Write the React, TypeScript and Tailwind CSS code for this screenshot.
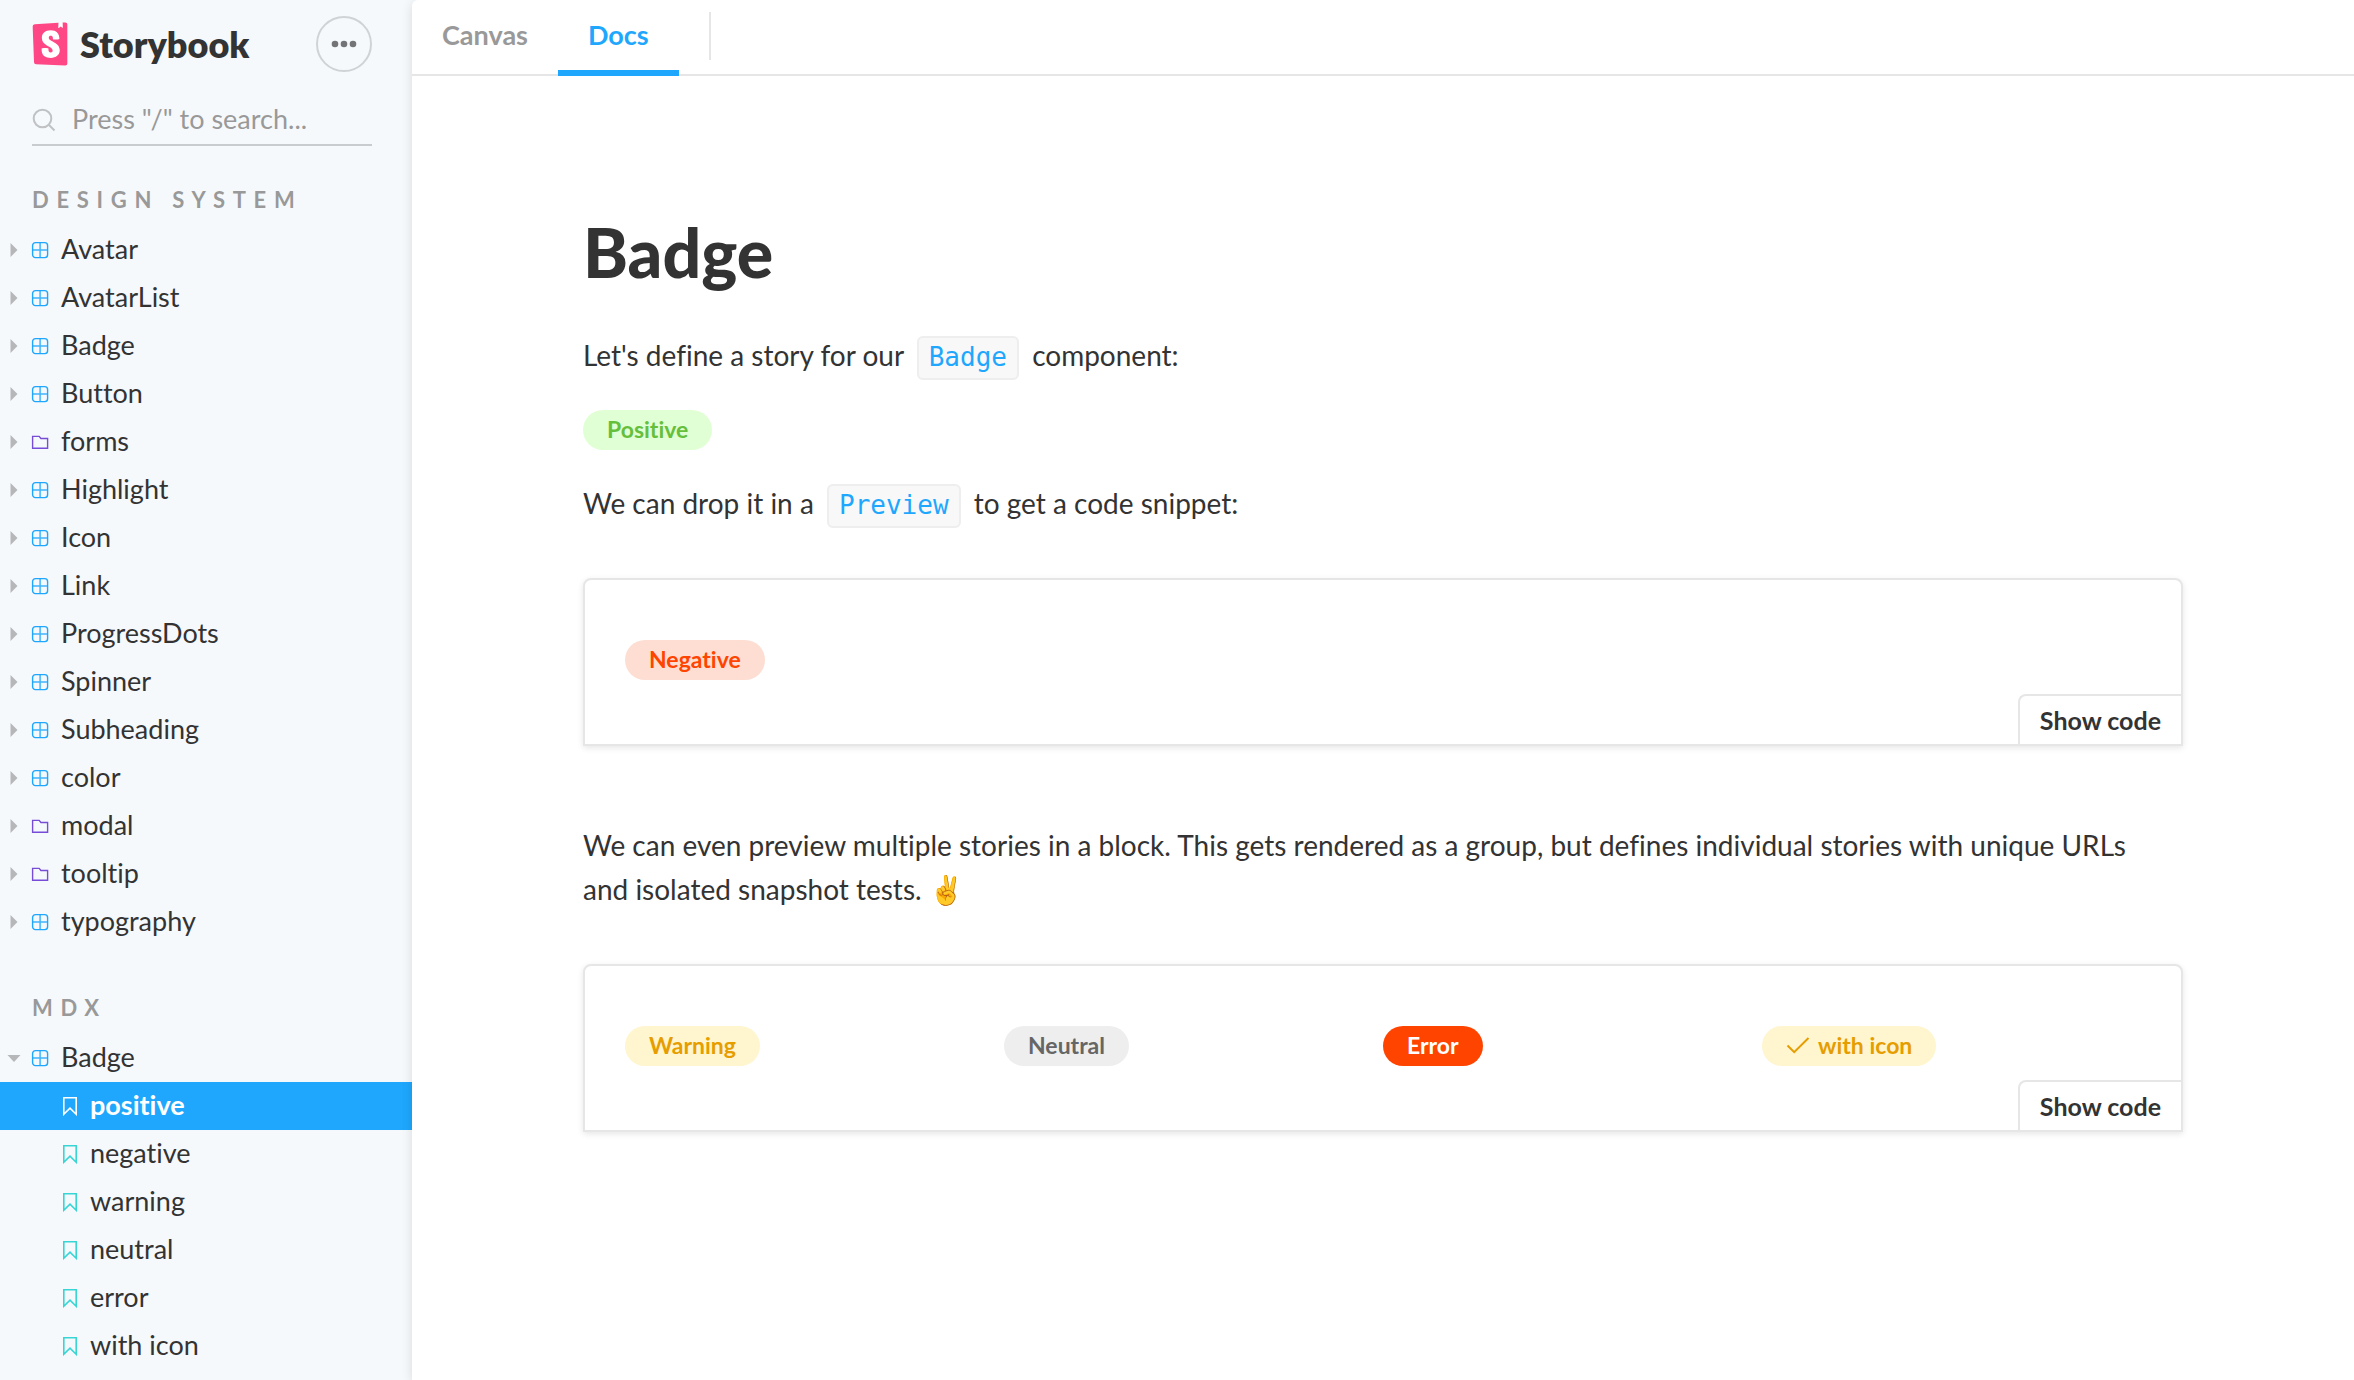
import type { ReactNode } from "react";

type ItemKind = "component" | "folder";

const designSystem: { name: string; kind: ItemKind }[] = [
  { name: "Avatar", kind: "component" },
  { name: "AvatarList", kind: "component" },
  { name: "Badge", kind: "component" },
  { name: "Button", kind: "component" },
  { name: "forms", kind: "folder" },
  { name: "Highlight", kind: "component" },
  { name: "Icon", kind: "component" },
  { name: "Link", kind: "component" },
  { name: "ProgressDots", kind: "component" },
  { name: "Spinner", kind: "component" },
  { name: "Subheading", kind: "component" },
  { name: "color", kind: "component" },
  { name: "modal", kind: "folder" },
  { name: "tooltip", kind: "folder" },
  { name: "typography", kind: "component" },
];

const stories = ["positive", "negative", "warning", "neutral", "error", "with icon"];

function Logo() {
  return (
    <svg viewBox="2 0 20 24" className="h-11 w-9 shrink-0" aria-hidden="true">
      <path fill="#fff" d="M16 .4l4-.2v4h-4z" />
      <path
        fill="#FF4785"
        d="M16.71.243l-.12 2.71a.18.18 0 00.29.15l1.06-.8.9.7a.18.18 0 00.28-.14l-.1-2.76 1.33-.1a1.2 1.2 0 011.279 1.2v21.596a1.2 1.2 0 01-1.26 1.2l-16.096-.72a1.2 1.2 0 01-1.15-1.16l-.75-19.797a1.2 1.2 0 011.13-1.27L16.7.222z"
      />
      <path
        fill="#fff"
        d="M13.64 9.3c0 .47 3.16.24 3.59-.08 0-3.2-1.72-4.89-4.859-4.89-3.15 0-4.899 1.72-4.899 4.29 0 4.45 5.999 4.53 5.999 6.959 0 .7-.32 1.1-1.05 1.1-.96 0-1.35-.49-1.3-2.16 0-.36-3.649-.48-3.769 0-.27 4.03 2.23 5.2 5.099 5.2 2.79 0 4.969-1.49 4.969-4.18 0-4.77-6.099-4.64-6.099-6.999 0-.97.72-1.1 1.13-1.1.45 0 1.25.07 1.19 1.87z"
      />
    </svg>
  );
}

function SearchIcon() {
  return (
    <svg viewBox="0 0 24 24" className="size-6 shrink-0" fill="none" stroke="#BFC1C3" strokeWidth="2" aria-hidden="true">
      <circle cx="10.5" cy="10.5" r="8.8" />
      <path d="M16.5 16.5l6 6" />
    </svg>
  );
}

function Arrow({ open }: { open?: boolean }) {
  return (
    <svg viewBox="0 0 14 14" className="size-3.5 shrink-0" fill="#B5B7B9" aria-hidden="true">
      <path d={open ? "M0.5 4h13L7 11z" : "M3.5 0l7 7-7 7z"} />
    </svg>
  );
}

function KindIcon({ kind }: { kind: ItemKind }) {
  return kind === "component" ? (
    <svg viewBox="0 0 18 18" className="size-[18px] shrink-0" fill="none" stroke="#1EA7FD" aria-hidden="true">
      <rect x="1.6" y="1.6" width="15" height="15" rx="2.8" strokeWidth="1.4" />
      <path d="M9.1 1.6v15M1.6 9.1h15" strokeWidth="1.5" opacity="0.85" />
    </svg>
  ) : (
    <svg viewBox="0 0 18 18" className="size-[18px] shrink-0" fill="none" stroke="#774CD7" strokeWidth="1.4" aria-hidden="true">
      <path d="M1.6 15.3V3.4h6.6l1.7 2.1h6.7v9.8z" />
    </svg>
  );
}

function BookmarkIcon() {
  return (
    <svg viewBox="0 0 16 20" className="h-5 w-4 shrink-0" fill="none" stroke="currentColor" strokeWidth="1.6" aria-hidden="true">
      <path d="M1.8 1.8h12.4v16.4L8 12.1l-6.2 6.1z" />
    </svg>
  );
}

function TreeHeading({ children }: { children: ReactNode }) {
  return <h2 className="mb-3 px-8 text-[22px] leading-7 font-bold tracking-[0.35em] text-[#999] uppercase">{children}</h2>;
}

function TreeItem({ name, kind, open }: { name: string; kind: ItemKind; open?: boolean }) {
  return (
    <a href="#" className="flex h-12 items-center pl-[7px] text-[27px] text-[#333]">
      <Arrow open={open} />
      <span className="mr-3 ml-2.5 flex">
        <KindIcon kind={kind} />
      </span>
      <span className="pb-0.5">{name}</span>
    </a>
  );
}

function StoryItem({ name, selected }: { name: string; selected: boolean }) {
  return (
    <a
      href="#"
      aria-current={selected ? "page" : undefined}
      className={
        selected
          ? "flex h-12 items-center gap-3 bg-[#1EA7FD] pl-[62px] text-[27px] font-bold text-white"
          : "flex h-12 items-center gap-3 pl-[62px] text-[27px] text-[#333]"
      }
    >
      <span className={selected ? "flex text-white" : "flex text-[#37D5D3]"}>
        <BookmarkIcon />
      </span>
      <span className="pb-0.5">{name}</span>
    </a>
  );
}

function Sidebar() {
  return (
    <aside className="w-[412px] shrink-0 bg-[#F6F9FC] pt-4">
      <div className="flex items-center pr-10 pl-8">
        <a href="#" className="flex items-center gap-3 text-4xl font-extrabold text-[#333]">
          <Logo />
          Storybook
        </a>
        <button
          type="button"
          aria-label="Shortcuts"
          className="ml-auto flex size-14 items-center justify-center rounded-full border-2 border-[#D0D3D6]"
        >
          <svg viewBox="0 0 26 8" className="h-2 w-[26px]" fill="#737475" aria-hidden="true">
            <circle cx="4" cy="4" r="3.3" />
            <circle cx="13" cy="4" r="3.3" />
            <circle cx="22" cy="4" r="3.3" />
          </svg>
        </button>
      </div>
      <label className="mt-6 mr-10 ml-8 flex h-[50px] items-center gap-4 border-b-2 border-[#C9CCCF]">
        <SearchIcon />
        <input
          type="search"
          aria-label="Search"
          placeholder={'Press "/" to search...'}
          className="min-w-0 flex-1 bg-transparent pb-0.5 text-[27px] text-[#333] outline-none placeholder:text-[#999]"
        />
      </label>
      <nav className="mt-10 flex flex-col gap-12">
        <section>
          <TreeHeading>Design System</TreeHeading>
          <ul>
            {designSystem.map((item) => (
              <li key={item.name}>
                <TreeItem name={item.name} kind={item.kind} />
              </li>
            ))}
          </ul>
        </section>
        <section>
          <TreeHeading>MDX</TreeHeading>
          <TreeItem name="Badge" kind="component" open />
          <ul>
            {stories.map((name) => (
              <li key={name}>
                <StoryItem name={name} selected={name === "positive"} />
              </li>
            ))}
          </ul>
        </section>
      </nav>
    </aside>
  );
}

const tones = {
  positive: "bg-[#E1FFD4] text-[#66BF3C]",
  negative: "bg-[#FEDED2] text-[#FF4400]",
  warning: "bg-[#FFF5CF] text-[#E69D00]",
  neutral: "bg-[#EEEEEE] text-[#666666]",
  error: "bg-[#FF4400] text-white",
};

function Badge({ tone, children }: { tone: keyof typeof tones; children: ReactNode }) {
  return (
    <span className={`inline-flex h-10 items-center gap-2 rounded-full px-6 pb-0.5 text-[23px] font-bold ${tones[tone]}`}>
      {children}
    </span>
  );
}

function Code({ children }: { children: ReactNode }) {
  return (
    <code className="mx-1.5 rounded-md border-2 border-[#EEEEEE] bg-[#F8F8F8] px-2.5 pt-1 pb-1.5 font-['DejaVu_Sans_Mono',monospace] text-[26px] leading-8 text-[#1EA7FD]">
      {children}
    </code>
  );
}

function Preview({ children }: { children: ReactNode }) {
  return (
    <div className="relative mt-[53px] rounded-t-lg border-2 border-[#E6E6E6] bg-white px-10 pt-[60px] pb-16 shadow-[0_2px_6px_rgba(0,0,0,0.1)]">
      <div className="grid grid-cols-4 items-start">{children}</div>
      <button
        type="button"
        className="absolute right-0 bottom-0 h-[50px] rounded-tl-lg border-t-2 border-l-2 border-[#E6E6E6] bg-white px-5 text-[25px] font-bold text-[#333]"
      >
        Show code
      </button>
    </div>
  );
}

function Docs() {
  return (
    <article className="mx-auto max-w-[1600px] pt-[140px] pb-20 text-[28px] leading-[44px] text-[#333]">
      <h1 className="text-[68px] leading-[72px] font-black">Badge</h1>
      <p className="mt-[45px]">
        Let's define a story for our <Code>Badge</Code> component:
      </p>
      <div className="mt-[33px] flex">
        <Badge tone="positive">Positive</Badge>
      </div>
      <p className="mt-[31px]">
        We can drop it in a <Code>Preview</Code> to get a code snippet:
      </p>
      <Preview>
        <div className="flex">
          <Badge tone="negative">Negative</Badge>
        </div>
      </Preview>
      <p className="mt-[77px] pr-4">
        We can even preview multiple stories in a block. This gets rendered as a group, but defines individual stories with
        unique URLs and isolated snapshot tests. ✌️
      </p>
      <Preview>
        <div className="flex">
          <Badge tone="warning">Warning</Badge>
        </div>
        <div className="flex">
          <Badge tone="neutral">Neutral</Badge>
        </div>
        <div className="flex">
          <Badge tone="error">Error</Badge>
        </div>
        <div className="flex">
          <Badge tone="warning">
            <svg viewBox="0 0 24 20" className="h-5 w-6" fill="none" stroke="currentColor" strokeWidth="2" aria-hidden="true">
              <path d="M1.5 10.5l6.7 6.7L22.5 3" />
            </svg>
            with icon
          </Badge>
        </div>
      </Preview>
    </article>
  );
}

export default function App() {
  return (
    <div className="flex min-h-screen bg-[#F6F9FC] font-['Lato',sans-serif] [font-variant-ligatures:none]">
      <Sidebar />
      <main className="relative min-w-0 flex-1 rounded-tl-md bg-white shadow-[0_2px_12px_rgba(0,0,0,0.12)]">
        <div role="tablist" className="flex h-[76px] items-start border-b-2 border-[#E6E6E6] text-[27px] font-bold text-[#999]">
          <button type="button" role="tab" aria-selected="false" className="h-[76px] border-b-[6px] border-transparent px-[30px]">
            Canvas
          </button>
          <button
            type="button"
            role="tab"
            aria-selected="true"
            className="h-[76px] border-b-[6px] border-[#1EA7FD] px-[30px] text-[#1EA7FD]"
          >
            Docs
          </button>
          <span className="mt-3 ml-[30px] h-12 w-0.5 bg-[#E6E6E6]" />
        </div>
        <Docs />
      </main>
    </div>
  );
}
